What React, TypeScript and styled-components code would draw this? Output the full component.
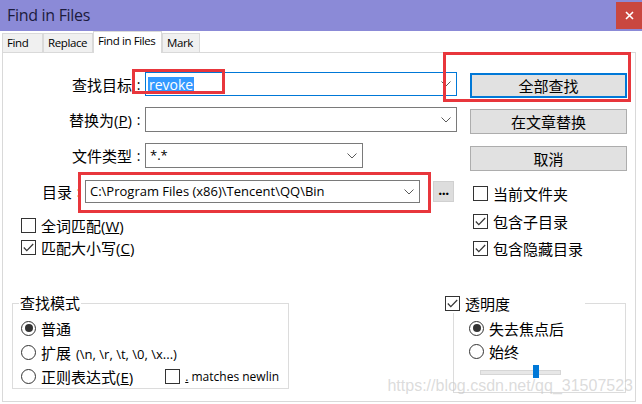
import React from 'react';
import styled, { createGlobalStyle } from 'styled-components';

const GlobalStyle = createGlobalStyle`
  * { box-sizing: border-box; }
  html, body { margin: 0; padding: 0; background: #ffffff; }
  body {
    font-family: "Open Sans", "Noto Sans CJK SC", sans-serif;
    color: #000000;
  }
`;

const Window = styled.div`
  width: 642px;
  height: 404px;
  display: flex;
  flex-direction: column;
  background: #ffffff;
  overflow: hidden;
`;

const TitleBar = styled.div`
  height: 31px;
  flex: none;
  display: flex;
  align-items: flex-start;
  justify-content: space-between;
  background: #8b8ad7;
`;

const Title = styled.span`
  margin: 4px 0 0 7px;
  font-size: 16px;
  letter-spacing: -0.3px;
  line-height: 22px;
  color: #1c1b3d;
`;

const CloseButton = styled.div`
  width: 26px;
  height: 27px;
  margin-top: 2px;
  background: #c9473f;
  display: flex;
  align-items: center;
  justify-content: center;
`;

const TabBar = styled.div`
  height: 21px;
  flex: none;
  display: flex;
  align-items: flex-end;
  padding-left: 2px;
`;

const Tab = styled.div<{ $active?: boolean; $w: number }>`
  width: ${(p) => p.$w}px;
  height: ${(p) => (p.$active ? 22 : 19)}px;
  margin-bottom: ${(p) => (p.$active ? -1 : 0)}px;
  padding: 2px 0 0 4px;
  background: ${(p) => (p.$active ? '#ffffff' : '#f0f0f0')};
  border: 1px solid #d9d9d9;
  border-bottom: none;
  font-size: 11.5px;
  letter-spacing: -0.4px;
  line-height: 14px;
  white-space: nowrap;
  position: relative;
  z-index: 1;
`;

const Panel = styled.div`
  flex: 1;
  margin: 0 6px 2px 2px;
  border: 1px solid #d9d9d9;
  position: relative;
  display: flex;
  flex-direction: column;
`;

const TopSection = styled.div`
  height: 240px;
  flex: none;
  display: flex;
`;

const LeftCol = styled.div`
  width: 454px;
  padding-top: 19px;
  display: flex;
  flex-direction: column;
`;

const RightCol = styled.div`
  width: 157px;
  margin-left: 13px;
  padding-top: 20px;
  display: flex;
  flex-direction: column;
`;

const FieldRow = styled.div<{ $h: number; $mt?: number }>`
  height: ${(p) => p.$h}px;
  margin-top: ${(p) => p.$mt ?? 0}px;
  display: flex;
  align-items: center;
`;

const FieldLabel = styled.label<{ $w: number }>`
  width: ${(p) => p.$w}px;
  flex: none;
  display: flex;
  justify-content: flex-end;
  align-items: center;
  font-size: 15px;
  white-space: nowrap;
`;

const Colon = styled.span`
  width: 13px;
  text-align: center;
  font-size: 14px;
`;

const Combo = styled.div<{ $w: number; $focus?: boolean; $pad?: number }>`
  width: ${(p) => p.$w}px;
  height: 100%;
  flex: none;
  display: flex;
  align-items: center;
  padding-left: ${(p) => p.$pad ?? 2}px;
  background: #ffffff;
  border: 1px solid ${(p) => (p.$focus ? '#0078d7' : '#7a7a7a')};
  font-size: 13px;
`;

const ComboText = styled.span`
  flex: 1;
  min-width: 0;
  white-space: nowrap;
  line-height: 19px;
`;

const Selected = styled.span`
  display: inline-block;
  background: #3399ff;
  color: #ffffff;
  padding: 0 1px;
  font-size: 14px;
  line-height: 16px;
  vertical-align: middle;
`;

const ChevronBox = styled.span`
  width: 20px;
  flex: none;
  display: flex;
  justify-content: center;
`;

const DotsButton = styled.div`
  width: 21px;
  height: 21px;
  margin-left: 13px;
  background: #dddddd;
  border: 1px solid #d0d0d0;
  display: flex;
  align-items: center;
  justify-content: center;
  font-size: 14px;
  font-weight: 700;
  letter-spacing: -0.5px;
  padding-bottom: 4px;
`;

const CheckList = styled.div<{ $mt: number; $ml: number }>`
  margin-top: ${(p) => p.$mt}px;
  margin-left: ${(p) => p.$ml}px;
  display: flex;
  flex-direction: column;
`;

const CheckRow = styled.label<{ $h: number }>`
  height: ${(p) => p.$h}px;
  display: flex;
  align-items: center;
  gap: 5px;
  font-size: 15px;
  white-space: nowrap;
`;

const Box = styled.span`
  width: 15px;
  height: 15px;
  flex: none;
  background: #ffffff;
  border: 1px solid #333333;
  display: flex;
  align-items: center;
  justify-content: center;
`;

const Circle = styled.span`
  width: 15px;
  height: 15px;
  flex: none;
  border-radius: 50%;
  background: #ffffff;
  border: 1px solid #333333;
  display: flex;
  align-items: center;
  justify-content: center;
`;

const Dot = styled.span`
  width: 8px;
  height: 8px;
  border-radius: 50%;
  background: #333333;
`;

const Latin = styled.span<{ $size?: number }>`
  font-size: ${(p) => p.$size ?? 13}px;
  margin-left: 5px;
`;

const Button = styled.div<{ $default?: boolean; $mt?: number }>`
  height: 25px;
  margin-top: ${(p) => p.$mt ?? 0}px;
  display: flex;
  align-items: center;
  justify-content: center;
  background: #e1e1e1;
  border: 1px solid ${(p) => (p.$default ? '#0078d7' : '#adadad')};
  box-shadow: ${(p) => (p.$default ? 'inset 0 0 0 1px #0078d7' : 'none')};
  font-size: 15px;
`;

const BottomSection = styled.div`
  display: flex;
  align-items: flex-start;
`;

const Group = styled.fieldset<{ $w: number; $h: number; $ml: number }>`
  width: ${(p) => p.$w}px;
  height: ${(p) => p.$h}px;
  margin: 0 0 0 ${(p) => p.$ml}px;
  padding: 3px 0 0 0;
  border: 1px solid #dcdcdc;
  min-width: 0;
`;

const Legend = styled.legend<{ $ml: number }>`
  margin-left: ${(p) => p.$ml}px;
  padding: 0 1px;
  font-size: 15px;
  line-height: 20px;
`;

/* transparency group: its checkbox header hangs left of the frame */
const TransGroup = styled.div`
  flex: 0 0 173px;
  width: 173px;
  margin-left: 164px;
  display: flex;
  flex-direction: column;
`;

const TransHeader = styled.div`
  height: 20px;
  margin-left: -9px;
  display: flex;
`;

const HeaderCheck = styled.div`
  flex: 0 0 141px;
  width: 141px;
  display: flex;
  align-items: center;
  gap: 5px;
  font-size: 15px;
  padding-left: 1px;
`;

const HeaderLine = styled.div`
  flex: 1 1 auto;
  height: 10px;
  align-self: flex-end;
  border-top: 1px solid #dcdcdc;
  border-right: 1px solid #dcdcdc;
`;

const TransBody = styled.div`
  height: 80px;
  padding: 3px 0 0 15px;
  border: 1px solid #dcdcdc;
  border-top: none;
  display: flex;
  flex-direction: column;
`;

const GroupBody = styled.div<{ $ml: number }>`
  margin-left: ${(p) => p.$ml}px;
  display: flex;
  flex-direction: column;
`;

const InlineRow = styled.div`
  display: flex;
  align-items: center;
`;

const SideCheck = styled(CheckRow)`
  margin-left: 32px;
  font-size: 12px;
`;

const SliderRow = styled.div`
  height: 18px;
  margin-left: 11px;
  display: flex;
  align-items: center;
`;

const Track = styled.div`
  width: 81px;
  height: 5px;
  background: #e7e7e7;
  border: 1px solid #d6d6d6;
  position: relative;
`;

const Thumb = styled.div`
  position: absolute;
  left: 52px;
  top: -6px;
  width: 6px;
  height: 13px;
  background: #0078d7;
`;

const Annotation = styled.div<{ $x: number; $y: number; $w: number; $h: number }>`
  position: absolute;
  left: ${(p) => p.$x}px;
  top: ${(p) => p.$y}px;
  width: ${(p) => p.$w}px;
  height: ${(p) => p.$h}px;
  border: 3px solid #e8363c;
  pointer-events: none;
`;

const Watermark = styled.div`
  position: absolute;
  right: 2px;
  bottom: 6px;
  font-family: "Liberation Sans", sans-serif;
  font-size: 16px;
  color: rgba(200, 200, 200, 0.65);
  white-space: nowrap;
`;

const Chevron = () => (
  <svg width="10" height="6" viewBox="0 0 10 6">
    <polyline points="0.5,0.5 5,5 9.5,0.5" fill="none" stroke="#5a5a5a" strokeWidth="1" />
  </svg>
);

const CheckMark = () => (
  <svg width="11" height="9" viewBox="0 0 11 9">
    <polyline points="0.8,4.5 3.8,7.6 10.2,1" fill="none" stroke="#333333" strokeWidth="1.2" />
  </svg>
);

const Check = ({ checked, children, h }: { checked?: boolean; children: React.ReactNode; h: number }) => (
  <CheckRow $h={h}>
    <Box>{checked && <CheckMark />}</Box>
    <span>{children}</span>
  </CheckRow>
);

const Radio = ({ checked, children, h }: { checked?: boolean; children: React.ReactNode; h: number }) => (
  <CheckRow $h={h}>
    <Circle>{checked && <Dot />}</Circle>
    <span>{children}</span>
  </CheckRow>
);

const App = () => {
  return (
    <>
      <GlobalStyle />
      <Window>
        <TitleBar>
          <Title>Find in Files</Title>
          <CloseButton>
            <svg width="9" height="9" viewBox="0 0 9 9">
              <path d="M1 1 L8 8 M8 1 L1 8" stroke="#ffffff" strokeWidth="1.6" />
            </svg>
          </CloseButton>
        </TitleBar>

        <TabBar>
          <Tab $w={41}>Find</Tab>
          <Tab $w={50}>Replace</Tab>
          <Tab $w={69} $active>Find in Files</Tab>
          <Tab $w={38}>Mark</Tab>
        </TabBar>

        <Panel>
          <TopSection>
            <LeftCol>
              <FieldRow $h={24}>
                <FieldLabel $w={142}>
                  查找目标<Colon>:</Colon>
                </FieldLabel>
                <Combo $w={312} $focus>
                  <ComboText>
                    <Selected>revoke</Selected>
                  </ComboText>
                  <ChevronBox>
                    <Chevron />
                  </ChevronBox>
                </Combo>
              </FieldRow>
              <FieldRow $h={25} $mt={11}>
                <FieldLabel $w={142}>
                  替换为(<u>P</u>)<Colon>:</Colon>
                </FieldLabel>
                <Combo $w={312}>
                  <ComboText />
                  <ChevronBox>
                    <Chevron />
                  </ChevronBox>
                </Combo>
              </FieldRow>
              <FieldRow $h={25} $mt={11}>
                <FieldLabel $w={142}>
                  文件类型<Colon>:</Colon>
                </FieldLabel>
                <Combo $w={218} $pad={4}>
                  <ComboText>*.*</ComboText>
                  <ChevronBox>
                    <Chevron />
                  </ChevronBox>
                </Combo>
              </FieldRow>
              <FieldRow $h={23} $mt={12}>
                <FieldLabel $w={82}>
                  目录<Colon>:</Colon>
                </FieldLabel>
                <Combo $w={335} $pad={4}>
                  <ComboText>C:\Program Files (x86)\Tencent\QQ\Bin</ComboText>
                  <ChevronBox>
                    <Chevron />
                  </ChevronBox>
                </Combo>
                <DotsButton>...</DotsButton>
              </FieldRow>
              <CheckList $mt={11} $ml={18}>
                <Check h={22}>
                  全词匹配(<u>W</u>)
                </Check>
                <Check h={22} checked>
                  匹配大小写(<u>C</u>)
                </Check>
              </CheckList>
            </LeftCol>

            <RightCol>
              <Button $default>全部查找</Button>
              <Button $mt={11}>在文章替换</Button>
              <Button $mt={12}>取消</Button>
              <CheckList $mt={9} $ml={3}>
                <Check h={27}>当前文件夹</Check>
                <Check h={28} checked>
                  包含子目录
                </Check>
                <Check h={27} checked>
                  包含隐藏目录
                </Check>
              </CheckList>
            </RightCol>
          </TopSection>

          <BottomSection>
            <Group $w={277} $h={96} $ml={9}>
              <Legend $ml={6}>查找模式</Legend>
              <GroupBody $ml={8}>
                <Radio h={24} checked>
                  普通
                </Radio>
                <Radio h={24}>
                  扩展<Latin>(\n, \r, \t, \0, \x...)</Latin>
                </Radio>
                <InlineRow>
                  <Radio h={24}>
                    正则表达式(<u>E</u>)
                  </Radio>
                  <SideCheck $h={24}>
                    <Box />
                    <span>
                      <u>.</u> matches newlin
                    </span>
                  </SideCheck>
                </InlineRow>
              </GroupBody>
            </Group>

            <TransGroup>
              <TransHeader>
                <HeaderCheck>
                  <Box>
                    <CheckMark />
                  </Box>
                  <span>透明度</span>
                </HeaderCheck>
                <HeaderLine />
              </TransHeader>
              <TransBody>
                <Radio h={24} checked>
                  失去焦点后
                </Radio>
                <Radio h={23}>始终</Radio>
                <SliderRow>
                  <Track>
                    <Thumb />
                  </Track>
                </SliderRow>
              </TransBody>
            </TransGroup>
          </BottomSection>

          <Annotation $x={129} $y={16} $w={93} $h={25} />
          <Annotation $x={440} $y={-1} $w={188} $h={50} />
          <Annotation $x={75} $y={119} $w={353} $h={41} />
          <Watermark>https://blog.csdn.net/qq_31507523</Watermark>
        </Panel>
      </Window>
    </>
  );
};

export default App;
